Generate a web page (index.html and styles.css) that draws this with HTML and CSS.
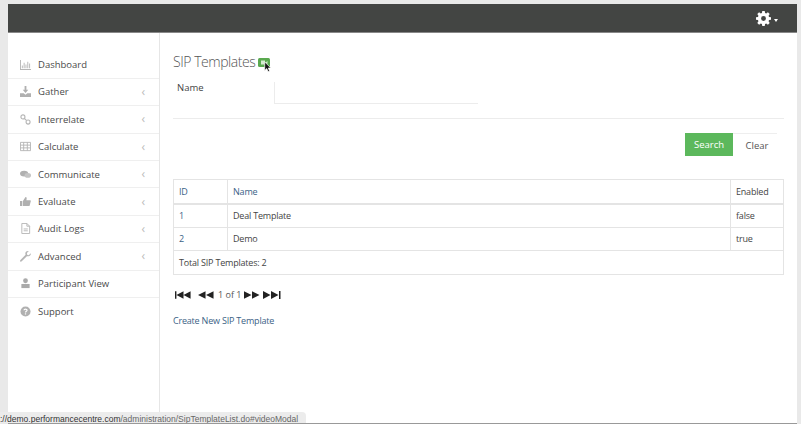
FILE: index.html
```html
<!DOCTYPE html>
<html lang="en">
<head>
<meta charset="utf-8">
<title>SIP Templates</title>
<link rel="stylesheet" href="styles.css">
</head>
<body>
<div class="app">
  <header class="topbar">
    <div class="settings">
      <svg class="gear" width="15" height="15" viewBox="0 0 16 16"><path fill="#fff" fill-rule="evenodd" d="M6.7 0h2.6l.4 2.1 1.2.5 1.8-1.2 1.9 1.9-1.2 1.8.5 1.2 2.1.4v2.6l-2.1.4-.5 1.2 1.2 1.8-1.9 1.9-1.8-1.2-1.2.5-.4 2.1H6.7l-.4-2.1-1.2-.5-1.8 1.2-1.9-1.9 1.2-1.8-.5-1.2L0 9.3V6.7l2.1-.4.5-1.2-1.2-1.8 1.9-1.9 1.8 1.2 1.2-.5zM8 5.4a2.6 2.6 0 1 0 0 5.2 2.6 2.6 0 0 0 0-5.2z"/></svg>
      <span class="caret"></span>
    </div>
  </header>
  <div class="columns">
    <nav class="sidebar">
      <a class="nav-item first"><svg class="ico" viewBox="0 0 12 12"><path fill="#b5b5b5" d="M0 1h1v10h11v1H0zM2 7h1v3H2zM4 4h1v6H4zM6 6h1v4H6zM8 3h1v7H8zM10 5h1v5h-1z"/></svg><span class="label">Dashboard</span></a>
      <a class="nav-item"><svg class="ico" viewBox="0 0 12 12"><path fill="#b0b0b0" d="M5 0h2v4h2L6 7.5 3 4h2zM0 8h4l2 1.5L8 8h4v4H0z"/></svg><span class="label">Gather</span><span class="chev">‹</span></a>
      <a class="nav-item"><svg class="ico" viewBox="0 0 12 12"><g fill="none" stroke="#b5b5b5" stroke-width="1.2"><circle cx="3.2" cy="3.2" r="2.2"/><circle cx="8.8" cy="8.8" r="2.2"/><path d="M5 5l2 2"/></g></svg><span class="label">Interrelate</span><span class="chev">‹</span></a>
      <a class="nav-item"><svg class="ico" viewBox="0 0 12 12"><path fill="none" stroke="#b5b5b5" d="M.5 1.5h11v9H.5zM.5 4.5h11M.5 7.5h11M4 1.5v9M8 1.5v9"/></svg><span class="label">Calculate</span><span class="chev">‹</span></a>
      <a class="nav-item"><svg class="ico" viewBox="0 0 12 12"><ellipse cx="4.5" cy="5" rx="4.5" ry="3.2" fill="#b0b0b0"/><ellipse cx="8.5" cy="7" rx="3.5" ry="2.6" fill="#c4c4c4"/></svg><span class="label">Communicate</span><span class="chev">‹</span></a>
      <a class="nav-item"><svg class="ico" viewBox="0 0 12 12"><path fill="#b0b0b0" d="M0 5.5h2.5V11H0zM3.2 5.5L6 1c1.2 0 1.5 1 1.2 2L7 4.5h4c1 0 1 1.2.6 1.8L10.5 10.5c-.2.4-.5.5-1 .5H3.2z"/></svg><span class="label">Evaluate</span><span class="chev">‹</span></a>
      <a class="nav-item"><svg class="ico" viewBox="0 0 12 12"><path fill="none" stroke="#b5b5b5" d="M2 .5h5.500L10.500 3.500v8H2zM7.500.5v3h3M4 6.500h4.500M4 8.500h4.500"/></svg><span class="label">Audit Logs</span><span class="chev">‹</span></a>
      <a class="nav-item"><svg class="ico" viewBox="0 0 12 12"><path fill="#b5b5b5" d="M11.8 2.500L9.500 4.500 7.800 4 7.500 2.300 9.500.2C7.800-.3 6 .8 5.800 2.500c0 .7 0 1.200.3 1.700L.5 9.800c-.6.600-.6 1.200-.2 1.600s1.100.4 1.600-.1l5.600-5.600c2.300.7 4.800-1.200 4.300-3.200z"/></svg><span class="label">Advanced</span><span class="chev">‹</span></a>
      <a class="nav-item"><svg class="ico" viewBox="0 0 12 12"><circle cx="6" cy="3" r="2.600" fill="#aaa"/><path fill="#aaa" d="M1.500 6.500h9V11h-9z"/></svg><span class="label">Participant View</span></a>
      <a class="nav-item"><svg class="ico" viewBox="0 0 12 12"><circle cx="6" cy="6" r="5.500" fill="#b0b0b0"/><path fill="none" stroke="#fff" stroke-width="1.300" d="M4.300 4.700C4.400 3 7.700 3 7.700 4.700 7.700 5.800 6 5.800 6 7.200"/><path fill="#fff" d="M5.300 8h1.400v1.300H5.300z"/></svg><span class="label">Support</span></a>
    </nav>
    <main class="content">
      <div class="title-row">
        <h1 class="title">SIP Templates</h1>
        <span class="video-btn">
          <svg class="video-icon" width="12" height="9" viewBox="0 0 12 9"><rect width="12" height="9" rx="1.500" fill="#5aa94f"/><path fill="#d5ecd0" d="M3 2.500h4v4H3zM7.500 4.500L9.500 3v3z"/></svg>
          <svg class="cursor" width="8" height="12" viewBox="0 0 9 13"><path fill="#111" stroke="#fff" stroke-width=".8" d="M.8.800v9.500l2.300-2 1.500 3.500 1.700-.8L4.800 7.700h3z"/></svg>
        </span>
      </div>
      <form class="search-form">
        <div class="field">
          <label class="field-label">Name</label>
          <div class="field-input"></div>
        </div>
        <div class="actions">
          <button class="btn-search" type="button">Search</button>
          <button class="btn-clear" type="button">Clear</button>
        </div>
      </form>
      <table class="data">
        <thead>
          <tr><th class="col-id link">ID</th><th class="link">Name</th><th class="col-en">Enabled</th></tr>
        </thead>
        <tbody>
          <tr><td class="link">1</td><td>Deal Template</td><td>false</td></tr>
          <tr><td class="link">2</td><td>Demo</td><td>true</td></tr>
          <tr><td colspan="3">Total SIP Templates: 2</td></tr>
        </tbody>
      </table>
      <div class="pager">
        <svg width="17" height="8" viewBox="0 0 18 8"><path fill="#222" d="M0 0h1.500v8H0zM1.500 4L9 0v8zM9 4l7.500-4v8z"/></svg>
        <svg class="gap" width="16" height="8" viewBox="0 0 17 8"><path fill="#222" d="M0 4l8-4v8zM8.500 4l8-4v8z"/></svg>
        <span class="page-text">1 of 1</span>
        <svg width="16" height="8" viewBox="0 0 17 8"><path fill="#222" d="M0 0l8 4-8 4zM8.500 0l8 4-8 4z"/></svg>
        <svg width="18" height="8" viewBox="0 0 18 8"><path fill="#222" d="M0 0l7.500 4L0 8zM8 0l7.500 4L8 8zM16 0h1.500v8H16z"/></svg>
      </div>
      <a class="create link">Create New SIP Template</a>
    </main>
  </div>
</div>
<div class="status"><span class="status-host">://demo.performancecentre.com</span>/administration/SipTemplateList.do#videoModal</div>
</body>
</html>
```
FILE: styles.css
```css
* { box-sizing: border-box; }
body {
  margin: 0;
  height: 424px;
  overflow: hidden;
  background: #e9e9e9;
  font-family: "Open Sans", sans-serif;
  font-size: 9px;
  color: #444;
}
.app {
  margin: 4px 4px 0 8px;
  height: 420px;
  background: #fff;
  display: flex;
  flex-direction: column;
  border-bottom: 1px solid #999;
}
.topbar {
  flex: none;
  height: 29px;
  background: #434543;
  border-bottom: 1px solid #888;
  display: flex;
  align-items: center;
  justify-content: flex-end;
  padding-right: 19px;
}
.settings { display: flex; align-items: center; gap: 3px; }
.gear { display: block; }
.caret {
  width: 0;
  height: 0;
  margin-top: 4px;
  border-left: 2.5px solid transparent;
  border-right: 2.5px solid transparent;
  border-top: 3px solid #fff;
}
.columns { flex: 1; display: flex; min-height: 0; }
.sidebar {
  flex: none;
  width: 152px;
  padding-top: 18.4px;
  border-right: 1px solid #e6e6e6;
}
.nav-item {
  display: flex;
  align-items: center;
  height: 27.4px;
  padding-left: 12px;
  border-bottom: 1px solid #efefef;
  color: #4a4a4a;
  font-size: 9.5px;
}
.nav-item:last-child { border-bottom: 0; }
.ico { flex: none; width: 11px; height: 11px; margin-right: 7px; }
.label { flex: 1; }
.chev { color: #bbb; font-size: 12px; margin-right: 14px; line-height: 1; }
.content { flex: 1; min-width: 0; padding: 17px 13px 0 13px; }
.title-row { display: flex; align-items: center; height: 22px; }
.title {
  margin: 0;
  font-size: 14px;
  font-weight: 300;
  color: #555;
  letter-spacing: -.45px;
}
.video-btn { position: relative; margin-left: 3px; display: block; height: 9px; top: 1px; }
.video-icon { display: block; }
.cursor { position: absolute; left: 6px; top: 3px; }
.field {
  display: flex;
  height: 39px;
  margin-top: 8px;
  border-bottom: 1px solid #ececec;
}
.field-label { width: 101px; padding: 1px 0 0 4px; font-size: 9.5px; color: #444; }
.field-input {
  width: 204px;
  height: 22px;
  margin-top: 2px;
  border-left: 1px solid #ececec;
  border-bottom: 1px solid #ececec;
}
.actions {
  display: flex;
  justify-content: flex-end;
  margin-top: 14px;
  padding-right: 7px;
}
.btn-search, .btn-clear {
  font: inherit;
  font-size: 9.5px;
  height: 23px;
  padding: 0;
  border: 0;
}
.btn-search { width: 48px; background: #5cb85c; color: #fff; }
.btn-clear { width: 44px; padding-left: 4px; background: #fff; color: #555; border-top: 1px solid #eee; }
.data {
  margin-top: 23px;
  width: 611px;
  border-collapse: collapse;
  table-layout: fixed;
  font-size: 9px;
  letter-spacing: -.2px;
  color: #444;
}
.data th, .data td {
  border: 1px solid #e4e4e4;
  padding: 0 5px;
  height: 23.5px;
  text-align: left;
  font-weight: 400;
}
.data th { border-bottom-width: 2px; height: 24px; }
.col-id { width: 54px; }
.col-en { width: 53px; }
.data .link, .link { color: #3b6286; }
.pager {
  display: flex;
  align-items: center;
  gap: 3px;
  margin: 14px 0 0 2px;
  height: 12px;
}
.pager .gap { margin-left: 3px; }
.page-text { color: #555; margin-left: 1px; }
.create { display: block; margin-top: 13px; font-size: 9px; letter-spacing: -.2px; }
.status {
  position: absolute;
  left: 0;
  top: 412px;
  width: 306px;
  height: 11px;
  line-height: 15px;
  background: #ececec;
  color: #666;
  font-family: "Liberation Sans", sans-serif;
  font-size: 8.5px;
  white-space: nowrap;
  overflow: hidden;
  border-radius: 0 4px 0 0;
}
.status-host { color: #333; }
```
